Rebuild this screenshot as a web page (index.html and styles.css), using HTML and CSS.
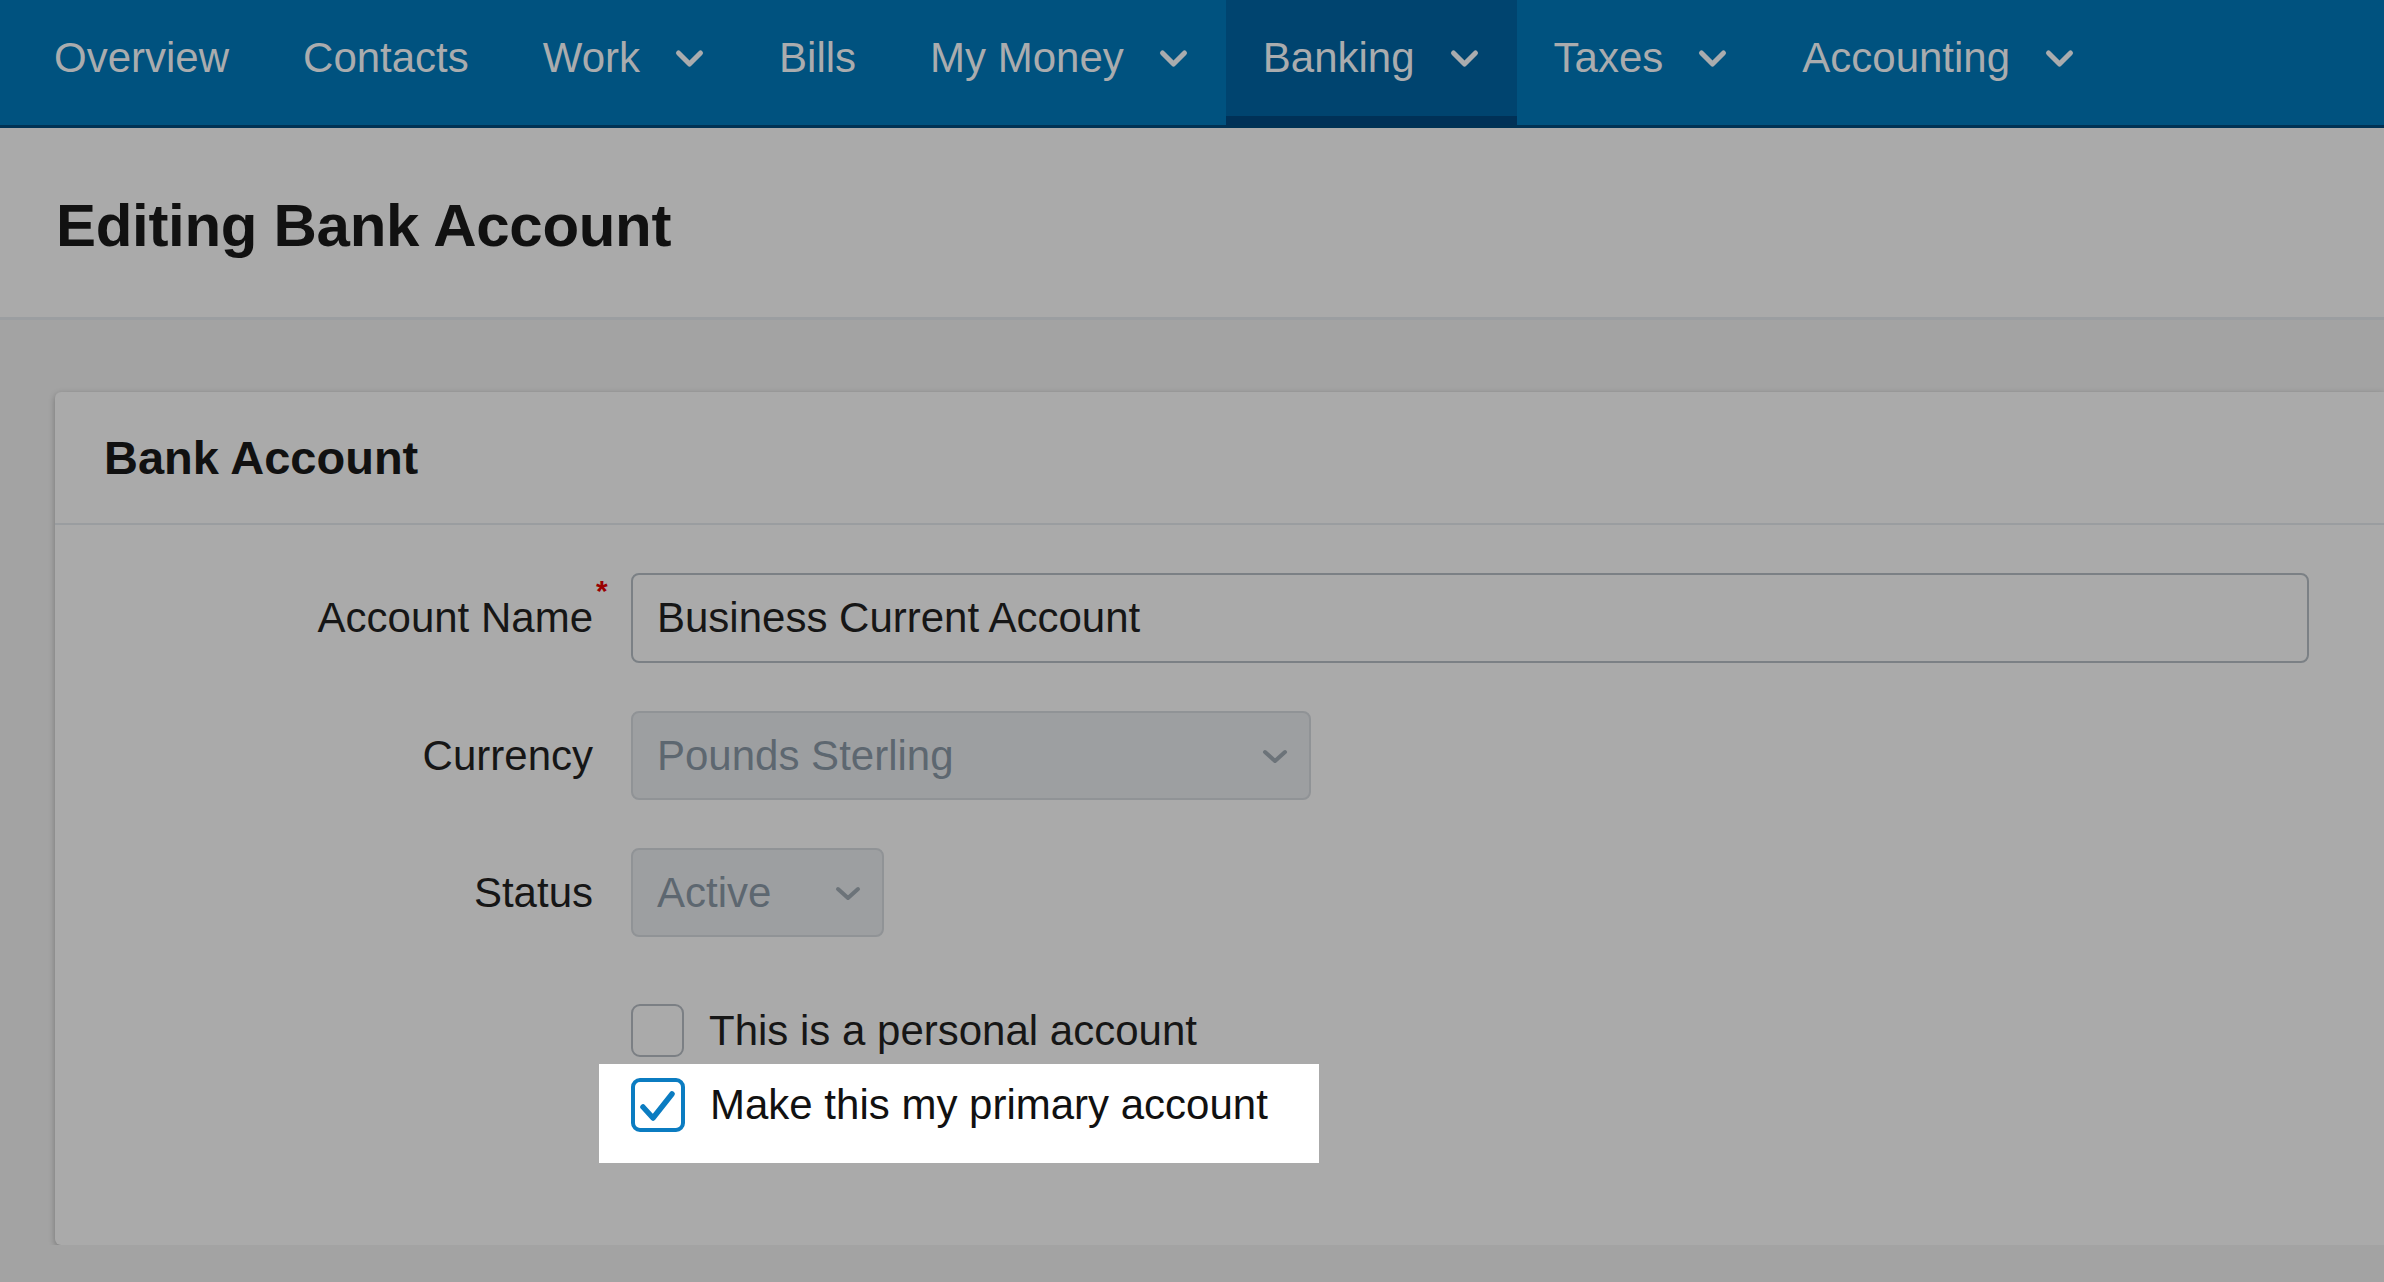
FILE: index.html
```
<!DOCTYPE html>
<html lang="en">

<head>
    <meta charset="UTF-8">
    <meta name="viewport" content="width=device-width, initial-scale=1.0">
    <title>Editing Bank Account</title>
    <link rel="stylesheet" href="styles.css">
</head>

<body>
    <nav class="topnav">
        <a href="#" class="nav-item">Overview</a>
        <a href="#" class="nav-item">Contacts</a>
        <a href="#" class="nav-item">Work
            <svg class="caret" viewBox="0 0 30 20"><path d="M4 4 L15 15 L26 4" /></svg>
        </a>
        <a href="#" class="nav-item">Bills</a>
        <a href="#" class="nav-item">My Money
            <svg class="caret" viewBox="0 0 30 20"><path d="M4 4 L15 15 L26 4" /></svg>
        </a>
        <a href="#" class="nav-item active">Banking
            <svg class="caret" viewBox="0 0 30 20"><path d="M4 4 L15 15 L26 4" /></svg>
        </a>
        <a href="#" class="nav-item">Taxes
            <svg class="caret" viewBox="0 0 30 20"><path d="M4 4 L15 15 L26 4" /></svg>
        </a>
        <a href="#" class="nav-item">Accounting
            <svg class="caret" viewBox="0 0 30 20"><path d="M4 4 L15 15 L26 4" /></svg>
        </a>
    </nav>

    <header class="page-header">
        <h1>Editing Bank Account</h1>
    </header>

    <main class="page-body">
        <section class="card">
            <div class="card-header">
                <h2>Bank Account</h2>
            </div>

            <form class="card-body">
                <label class="field-label required" for="account-name">Account Name</label>
                <input type="text" id="account-name" class="text-input" value="Business Current Account">

                <span class="field-label">Currency</span>
                <div class="select select-currency">
                    <span>Pounds Sterling</span>
                    <svg class="select-caret" viewBox="0 0 28 16"><path d="M4 4 L14 13 L24 4" /></svg>
                </div>

                <span class="field-label">Status</span>
                <div class="select select-status">
                    <span>Active</span>
                    <svg class="select-caret" viewBox="0 0 28 16"><path d="M4 4 L14 13 L24 4" /></svg>
                </div>

                <div class="checks">
                    <div class="check-row">
                        <span class="checkbox"></span>
                        <span>This is a personal account</span>
                    </div>
                    <div class="check-row spotlight">
                        <span class="checkbox checked">
                            <svg viewBox="0 0 54 54"><path d="M12 29 L22 40 L41 16" /></svg>
                        </span>
                        <span>Make this my primary account</span>
                    </div>
                </div>
            </form>
        </section>
    </main>
</body>

</html>
```

FILE: styles.css
```
body {
    margin: 0;
    background-color: #a3a3a3;
    font-family: "Liberation Sans", Arial, sans-serif;
    color: #161616;
    overflow: hidden;
}

/* top navigation */
.topnav {
    display: flex;
    height: 125px;
    padding-left: 17px;
    background-color: #00527f;
    border-bottom: 3px solid #003254;
}

.nav-item {
    display: flex;
    align-items: center;
    gap: 34px;
    padding: 0 37px;
    line-height: 116px;
    border-bottom: 9px solid transparent;
    color: #aaacae;
    font-size: 42px;
    text-decoration: none;
}

.nav-item.active {
    background-color: #00446f;
    border-bottom-color: #003157;
}

.caret {
    width: 31px;
    height: 20px;
    margin-top: 2px;
}

.caret path {
    fill: none;
    stroke: #aaacae;
    stroke-width: 5;
    stroke-linecap: round;
    stroke-linejoin: round;
}

/* page title */
.page-header {
    background-color: #aaaaaa;
    padding: 63px 56px 56px;
    border-bottom: 3px solid #9b9ea1;
}

.page-header h1 {
    margin: 0;
    font-size: 60px;
    line-height: 70px;
    letter-spacing: -0.3px;
    color: #111111;
}

.page-body {
    padding: 72px 0 0 55px;
}

/* card */
.card {
    background-color: #aaaaaa;
    border-radius: 6px 0 0 6px;
    box-shadow: 0 2px 6px rgba(0, 0, 0, 0.28);
}

.card-header {
    padding: 39px 49px 38px;
    border-bottom: 2px solid #9a9da0;
}

.card-header h2 {
    margin: 0;
    font-size: 47px;
    line-height: 54px;
    color: #111111;
}

.card-body {
    display: grid;
    grid-template-columns: 538px 1fr;
    column-gap: 38px;
    row-gap: 48px;
    align-items: center;
    padding: 48px 75px 82px 0;
}

.field-label {
    position: relative;
    justify-self: end;
    font-size: 42px;
}

.field-label.required::after {
    content: "*";
    position: absolute;
    left: 100%;
    top: -20px;
    margin-left: 3px;
    color: #9a0000;
    font-size: 30px;
    font-weight: bold;
}

.text-input {
    box-sizing: border-box;
    width: 100%;
    height: 90px;
    padding: 0 24px;
    border: 2px solid #7b8085;
    border-radius: 8px;
    background: transparent;
    font-family: inherit;
    font-size: 42px;
    color: #161616;
}

.select {
    box-sizing: border-box;
    display: flex;
    align-items: center;
    justify-content: space-between;
    height: 89px;
    padding: 0 20px 0 24px;
    border: 2px solid #909396;
    border-radius: 8px;
    background-color: #9d9fa1;
    color: #5d6770;
    font-size: 42px;
}

.select-currency {
    width: 680px;
}

.select-status {
    width: 253px;
}

.select-caret {
    width: 28px;
    height: 16px;
}

.select-caret path {
    fill: none;
    stroke: #6c7379;
    stroke-width: 4;
    stroke-linecap: round;
    stroke-linejoin: round;
}

/* checkbox options */
.checks {
    grid-column: 2;
    margin-top: 19px;
    display: flex;
    flex-direction: column;
    align-items: flex-start;
}

.check-row {
    display: flex;
    align-items: center;
    gap: 25px;
    font-size: 42px;
}

.check-row.spotlight {
    margin: 7px 0 0 -32px;
    padding: 14px 51px 31px 32px;
    background-color: #ffffff;
    color: #111111;
}

.checkbox {
    box-sizing: border-box;
    width: 53px;
    height: 53px;
    border: 2px solid #7b7f84;
    border-radius: 9px;
}

.checkbox.checked {
    width: 54px;
    height: 54px;
    border: 4px solid #0b7cc1;
    position: relative;
}

.checkbox svg {
    position: absolute;
    left: -4px;
    top: -4px;
    width: 54px;
    height: 54px;
}

.checkbox svg path {
    fill: none;
    stroke: #0b7cc1;
    stroke-width: 5.5;
    stroke-linecap: round;
    stroke-linejoin: round;
}
```
